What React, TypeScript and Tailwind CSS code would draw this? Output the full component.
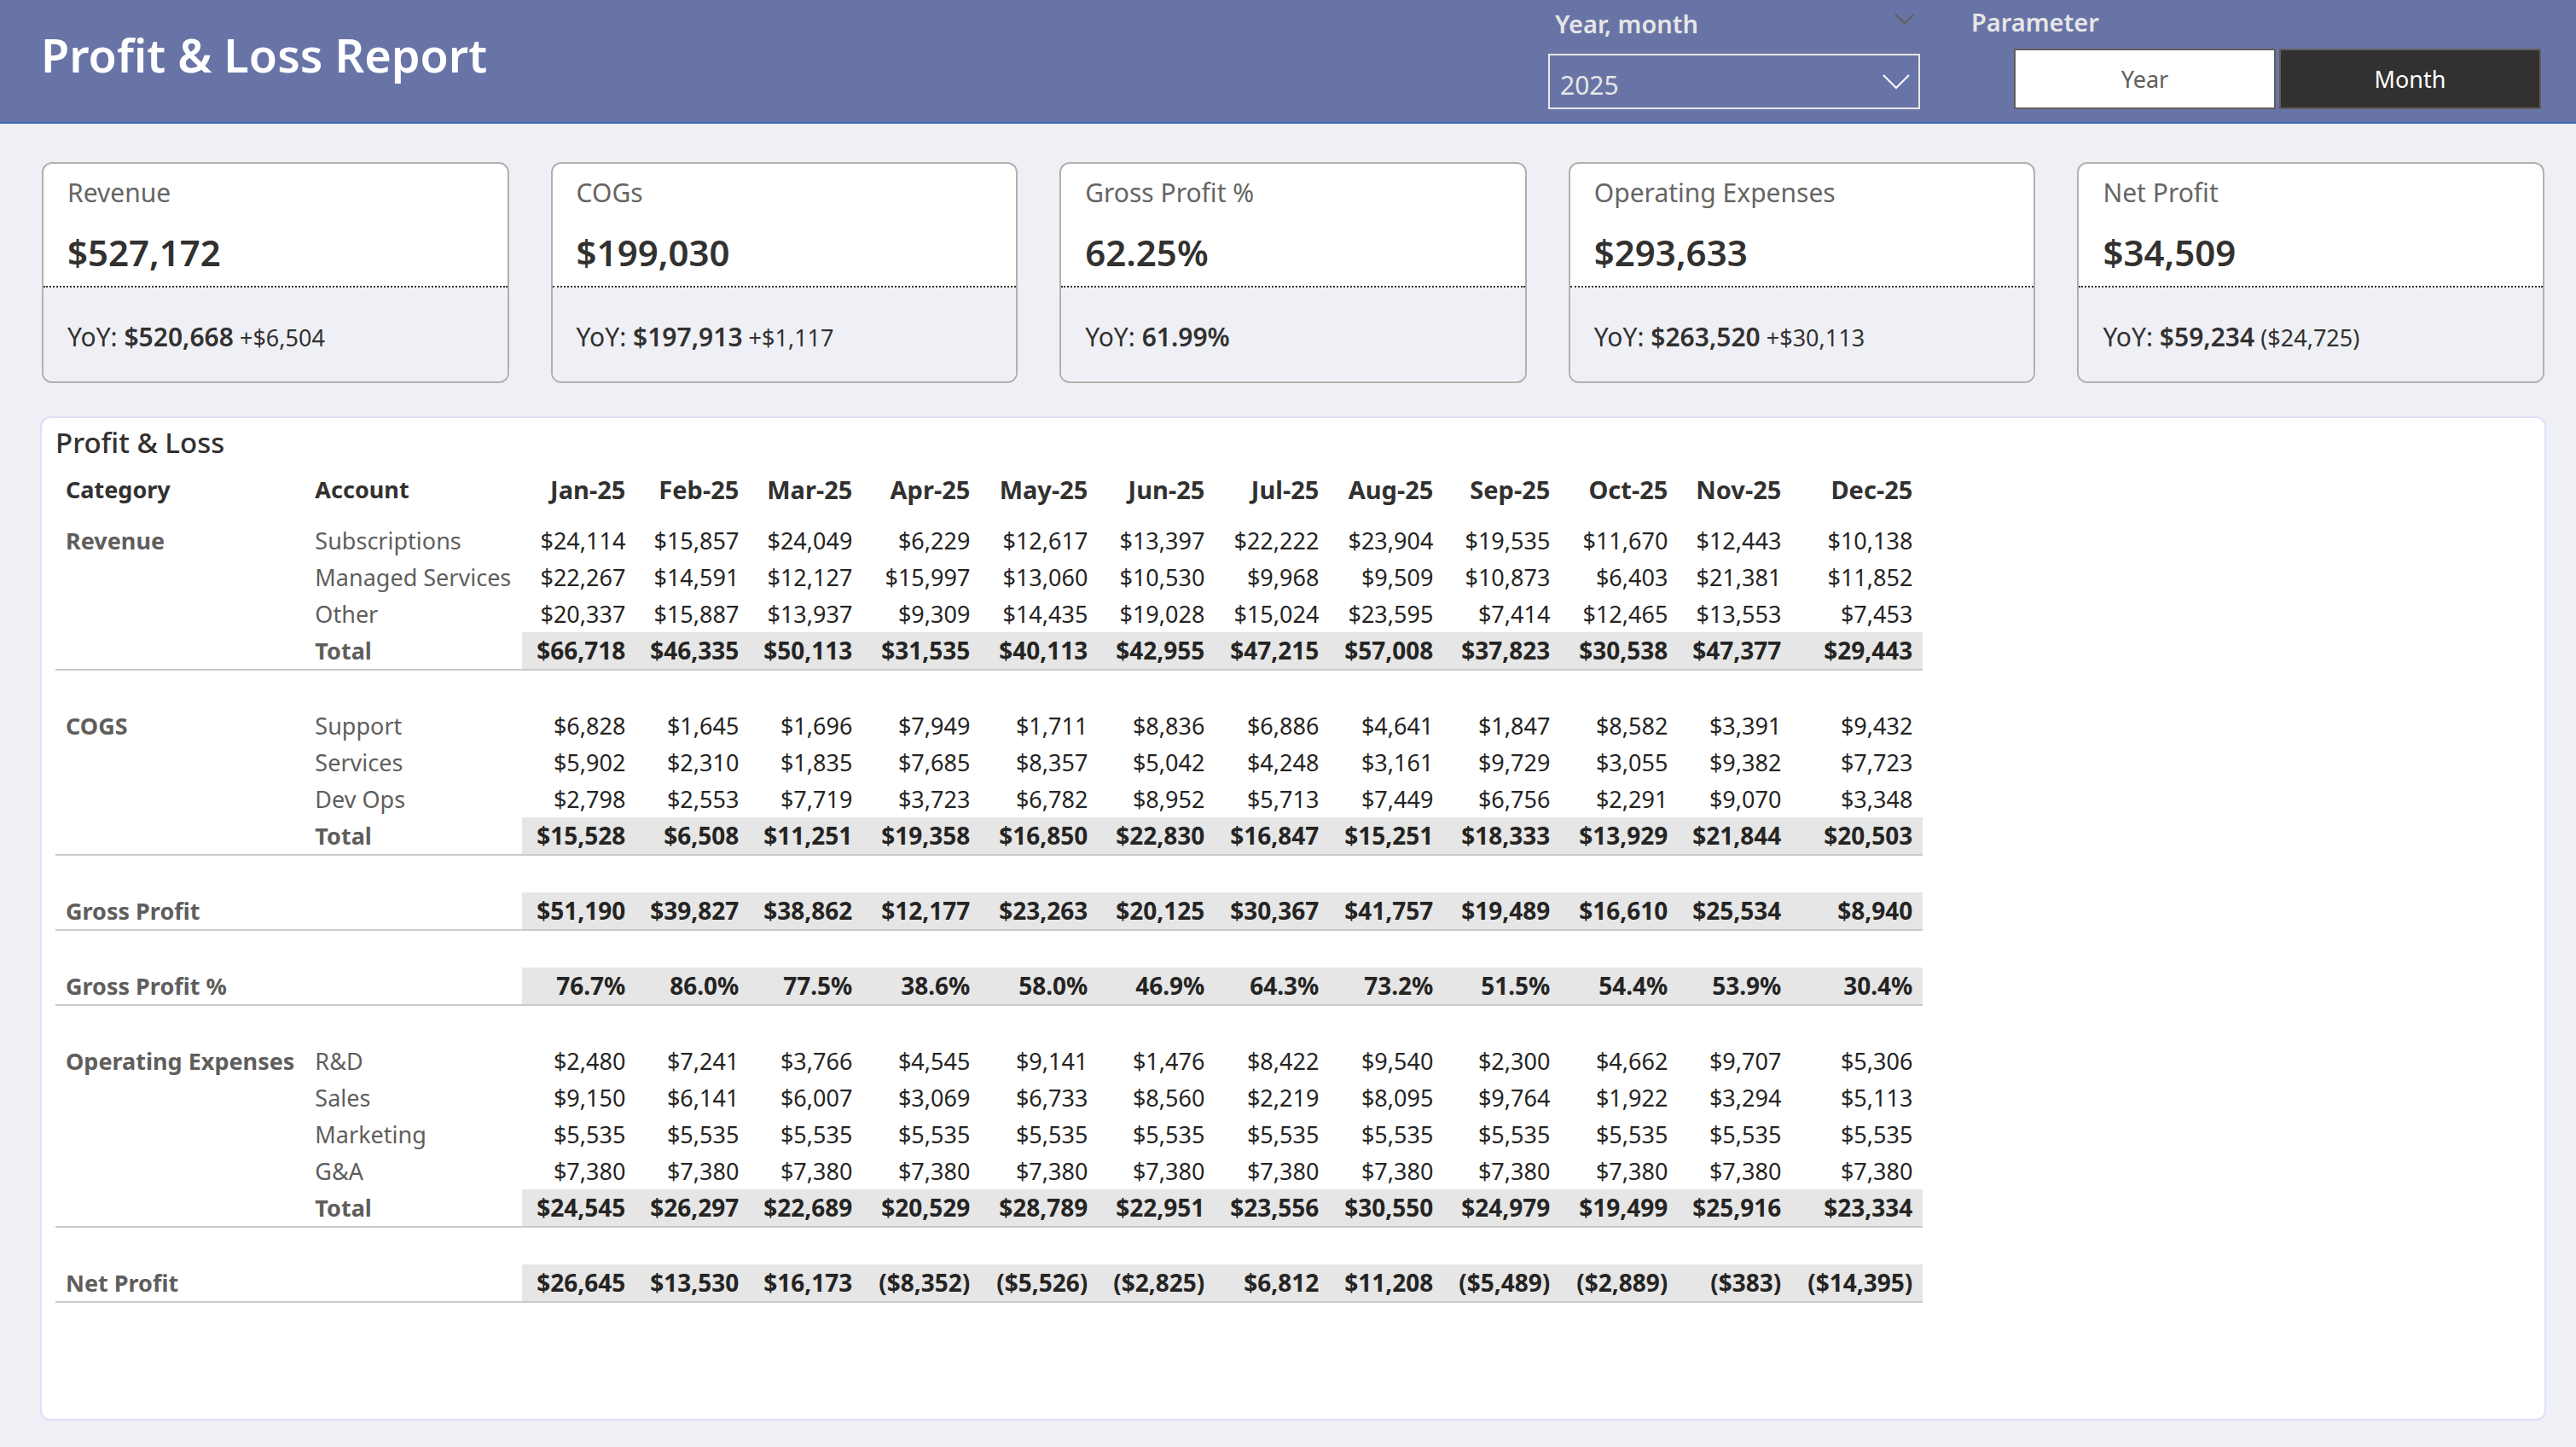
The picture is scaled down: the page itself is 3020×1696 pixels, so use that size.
import { useState } from "react";

type Kpi = { label: string; value: string; prior: string; change?: string };

const kpis: Kpi[] = [
  { label: "Revenue", value: "$527,172", prior: "$520,668", change: "+$6,504" },
  { label: "COGs", value: "$199,030", prior: "$197,913", change: "+$1,117" },
  { label: "Gross Profit %", value: "62.25%", prior: "61.99%" },
  { label: "Operating Expenses", value: "$293,633", prior: "$263,520", change: "+$30,113" },
  { label: "Net Profit", value: "$34,509", prior: "$59,234", change: "($24,725)" },
];

const months = [
  { name: "Jan-25", width: "w-[133px]" },
  { name: "Feb-25", width: "w-[133px]" },
  { name: "Mar-25", width: "w-[133px]" },
  { name: "Apr-25", width: "w-[138px]" },
  { name: "May-25", width: "w-[138px]" },
  { name: "Jun-25", width: "w-[137px]" },
  { name: "Jul-25", width: "w-[134px]" },
  { name: "Aug-25", width: "w-[134px]" },
  { name: "Sep-25", width: "w-[137px]" },
  { name: "Oct-25", width: "w-[138px]" },
  { name: "Nov-25", width: "w-[133px]" },
  { name: "Dec-25", width: "w-[154px]" },
];

type Line = { account: string; values: string; total?: boolean };
type Section = { category: string; lines: Line[] };

const sections: Section[] = [
  {
    category: "Revenue",
    lines: [
      { account: "Subscriptions", values: "$24,114 $15,857 $24,049 $6,229 $12,617 $13,397 $22,222 $23,904 $19,535 $11,670 $12,443 $10,138" },
      { account: "Managed Services", values: "$22,267 $14,591 $12,127 $15,997 $13,060 $10,530 $9,968 $9,509 $10,873 $6,403 $21,381 $11,852" },
      { account: "Other", values: "$20,337 $15,887 $13,937 $9,309 $14,435 $19,028 $15,024 $23,595 $7,414 $12,465 $13,553 $7,453" },
      { account: "Total", total: true, values: "$66,718 $46,335 $50,113 $31,535 $40,113 $42,955 $47,215 $57,008 $37,823 $30,538 $47,377 $29,443" },
    ],
  },
  {
    category: "COGS",
    lines: [
      { account: "Support", values: "$6,828 $1,645 $1,696 $7,949 $1,711 $8,836 $6,886 $4,641 $1,847 $8,582 $3,391 $9,432" },
      { account: "Services", values: "$5,902 $2,310 $1,835 $7,685 $8,357 $5,042 $4,248 $3,161 $9,729 $3,055 $9,382 $7,723" },
      { account: "Dev Ops", values: "$2,798 $2,553 $7,719 $3,723 $6,782 $8,952 $5,713 $7,449 $6,756 $2,291 $9,070 $3,348" },
      { account: "Total", total: true, values: "$15,528 $6,508 $11,251 $19,358 $16,850 $22,830 $16,847 $15,251 $18,333 $13,929 $21,844 $20,503" },
    ],
  },
  {
    category: "Gross Profit",
    lines: [
      { account: "", total: true, values: "$51,190 $39,827 $38,862 $12,177 $23,263 $20,125 $30,367 $41,757 $19,489 $16,610 $25,534 $8,940" },
    ],
  },
  {
    category: "Gross Profit %",
    lines: [
      { account: "", total: true, values: "76.7% 86.0% 77.5% 38.6% 58.0% 46.9% 64.3% 73.2% 51.5% 54.4% 53.9% 30.4%" },
    ],
  },
  {
    category: "Operating Expenses",
    lines: [
      { account: "R&D", values: "$2,480 $7,241 $3,766 $4,545 $9,141 $1,476 $8,422 $9,540 $2,300 $4,662 $9,707 $5,306" },
      { account: "Sales", values: "$9,150 $6,141 $6,007 $3,069 $6,733 $8,560 $2,219 $8,095 $9,764 $1,922 $3,294 $5,113" },
      { account: "Marketing", values: "$5,535 $5,535 $5,535 $5,535 $5,535 $5,535 $5,535 $5,535 $5,535 $5,535 $5,535 $5,535" },
      { account: "G&A", values: "$7,380 $7,380 $7,380 $7,380 $7,380 $7,380 $7,380 $7,380 $7,380 $7,380 $7,380 $7,380" },
      { account: "Total", total: true, values: "$24,545 $26,297 $22,689 $20,529 $28,789 $22,951 $23,556 $30,550 $24,979 $19,499 $25,916 $23,334" },
    ],
  },
  {
    category: "Net Profit",
    lines: [
      { account: "", total: true, values: "$26,645 $13,530 $16,173 ($8,352) ($5,526) ($2,825) $6,812 $11,208 ($5,489) ($2,889) ($383) ($14,395)" },
    ],
  },
];

function Chevron({ className }: { className: string }) {
  return (
    <svg viewBox="0 0 32 18" fill="none" stroke="currentColor" aria-hidden="true" className={className}>
      <path d="M1 1 L16 16 L31 1" strokeWidth="2" vectorEffect="non-scaling-stroke" />
    </svg>
  );
}

function Header() {
  const [grain, setGrain] = useState("Month");
  return (
    <header className="flex h-[145px] items-start border-b-2 border-[#3b6cb7] bg-[#6974a6] pr-[41px] pl-12">
      <h1 className="mt-[22px] flex-1 text-[54px] leading-[84px] font-semibold text-white">Profit &amp; Loss Report</h1>

      <div className="w-[436px]">
        <div className="flex h-[63px] items-start justify-between pr-[6px] pl-2">
          <label htmlFor="year" className="pt-2 text-[29px] leading-10 font-semibold text-[#e6e6e6]">
            Year, month
          </label>
          <button type="button" aria-label="Expand year filter" className="pt-4 text-[#605e5c]">
            <Chevron className="h-[13px] w-6" />
          </button>
        </div>
        <div className="relative">
          <select
            id="year"
            defaultValue="2025"
            className="h-[65px] w-full appearance-none border-2 border-[#e6e6e6] bg-transparent px-3 pt-2 text-[30px] leading-10 text-[#e6e6e6]"
          >
            <option>2025</option>
            <option>2024</option>
          </select>
          <Chevron className="pointer-events-none absolute top-6 right-3 h-[18px] w-8 text-white" />
        </div>
      </div>

      <div className="ml-[60px] w-[668px]" role="group" aria-labelledby="parameter">
        <div id="parameter" className="h-[57px] pt-[6px] text-[29px] leading-10 font-semibold text-[#e6e6e6]">
          Parameter
        </div>
        <div className="grid grid-cols-2 gap-1 pl-[50px]">
          {["Year", "Month"].map((option) => (
            <button
              key={option}
              type="button"
              aria-pressed={grain === option}
              onClick={() => setGrain(option)}
              className={
                "h-[71px] border-2 border-[#605e5c] text-[27px] leading-9 " +
                (grain === option ? "bg-[#323130] text-white" : "bg-white text-[#605e5c]")
              }
            >
              {option}
            </button>
          ))}
        </div>
      </div>
    </header>
  );
}

function KpiCard({ label, value, prior, change }: Kpi) {
  return (
    <section className="overflow-hidden rounded-xl border-2 border-[#b3b0ad] bg-white">
      <div className="border-b-2 border-dotted border-[#323130] px-7 pt-[14px] pb-[9px]">
        <h2 className="text-[30px] leading-10 text-[#666563]">{label}</h2>
        <p className="mt-5 text-[42px] leading-[60px] font-semibold text-[#323130]">{value}</p>
      </div>
      <p className="bg-[#eff0f5] px-7 pt-[38px] pb-[31px] text-[30px] leading-10 text-[#323130]">
        YoY: <span className="font-semibold">{prior}</span>
        {change && <span className="text-[27px]"> {change}</span>}
      </p>
    </section>
  );
}

function SectionRows({ category, lines }: Section) {
  return (
    <tbody>
      {lines.map((line, i) => (
        <tr key={line.account} className={line.total ? "h-[45px]" : "h-[43px]"}>
          <th
            scope="row"
            className={
              "px-3 text-left text-[27px] font-bold whitespace-nowrap text-[#605e5c] " +
              (line.total ? "border-b-2 border-[#cacaca]" : "")
            }
          >
            {i === 0 ? category : ""}
          </th>
          <td
            className={
              "px-3 text-left text-[27px] whitespace-nowrap text-[#605e5c] " +
              (line.total ? "border-b-2 border-[#cacaca] font-bold" : "")
            }
          >
            {line.account}
          </td>
          {line.values.split(" ").map((value, m) => (
            <td
              key={m}
              className={
                "pr-3 text-right text-[#252423] " +
                (line.total ? "border-b-2 border-[#cacaca] bg-[#e6e6e6] text-[28px] font-bold" : "text-[27px]")
              }
            >
              {value}
            </td>
          ))}
        </tr>
      ))}
      <tr className="h-[43px]" aria-hidden="true">
        <td colSpan={14} />
      </tr>
    </tbody>
  );
}

export default function App() {
  return (
    <div className="flex min-h-screen flex-col bg-[#eff0f6] font-['Noto_Sans','Open_Sans',sans-serif]">
      <Header />
      <main className="flex flex-1 flex-col pt-[45px] pr-[35px] pb-[31px] pl-[47px]">
        <div className="grid grid-cols-5 gap-[49px] px-[2px]">
          {kpis.map((kpi) => (
            <KpiCard key={kpi.label} {...kpi} />
          ))}
        </div>

        <section className="mt-[39px] flex-1 rounded-xl border-2 border-[#dfdff8] bg-white px-4 pt-[7px]">
          <h2 className="text-[33px] leading-[44px] font-medium text-[#323130]">Profit &amp; Loss</h2>
          <table className="mt-[11px] table-fixed border-separate border-spacing-0 leading-[43px]">
            <colgroup>
              <col className="w-[292px]" />
              <col className="w-[255px]" />
              {months.map((m) => (
                <col key={m.name} className={m.width} />
              ))}
            </colgroup>
            <thead>
              <tr className="h-[60px] align-top text-[#323130]">
                <th className="px-3 text-left text-[27px] font-bold">Category</th>
                <th className="px-3 text-left text-[27px] font-bold">Account</th>
                {months.map((m) => (
                  <th key={m.name} className="pr-3 text-right text-[29px] font-bold">
                    {m.name}
                  </th>
                ))}
              </tr>
            </thead>
            {sections.map((section) => (
              <SectionRows key={section.category} {...section} />
            ))}
          </table>
        </section>
      </main>
    </div>
  );
}
